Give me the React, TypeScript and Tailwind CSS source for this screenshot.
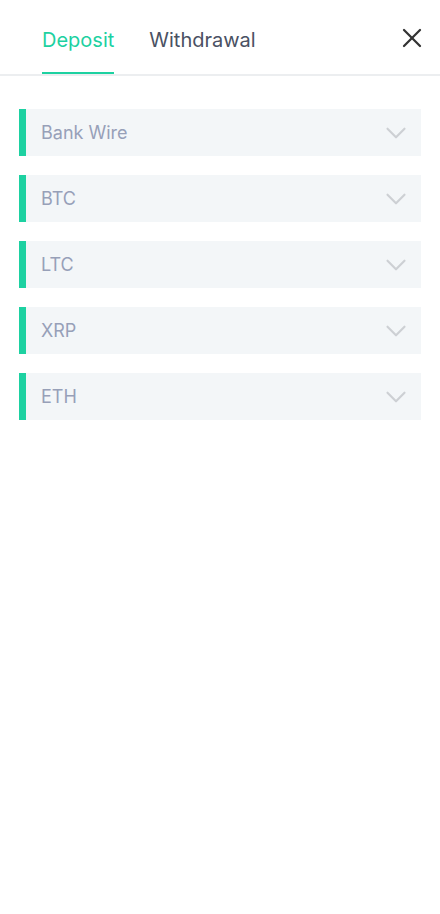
import { X, ChevronDown } from "lucide-react";

const methods = ["Bank Wire", "BTC", "LTC", "XRP", "ETH"];

const App = () => {
  return (
    <div className="w-[440px] min-h-[914px] bg-white font-['Inter',sans-serif]">
      {/* Tabs */}
      <div className="relative h-[76px] border-b-2 border-[#eceef0]">
        <div className="flex items-start gap-[35px] pl-[42px]">
          <button className="relative pt-[26px] pb-[20px] text-[20px] leading-[28px] text-[#1dd1a1]">
            Deposit
            <span className="absolute left-0 right-0 bottom-0 h-[2px] bg-[#1dd1a1]"></span>
          </button>
          <button className="pt-[26px] pb-[20px] text-[20px] leading-[28px] text-[#4a5163]">
            Withdrawal
          </button>
        </div>
        <button className="absolute right-[12px] top-[22px] text-[#333]">
          <X size={32} strokeWidth={1.7} />
        </button>
      </div>

      {/* Payment methods */}
      <div className="flex flex-col gap-[19px] px-[19px] pt-[33px]">
        {methods.map((m) => (
          <div
            key={m}
            className="flex items-center h-[47px] bg-[#f3f6f8] border-l-[7px] border-[#1dd1a1]"
          >
            <span className="flex-1 pl-[15px] text-[18px] text-[#97a0b8]">{m}</span>
            <ChevronDown size={34} strokeWidth={1.5} className="mr-[8px] text-[#cdd0d4]" />
          </div>
        ))}
      </div>
    </div>
  );
};

export default App;
